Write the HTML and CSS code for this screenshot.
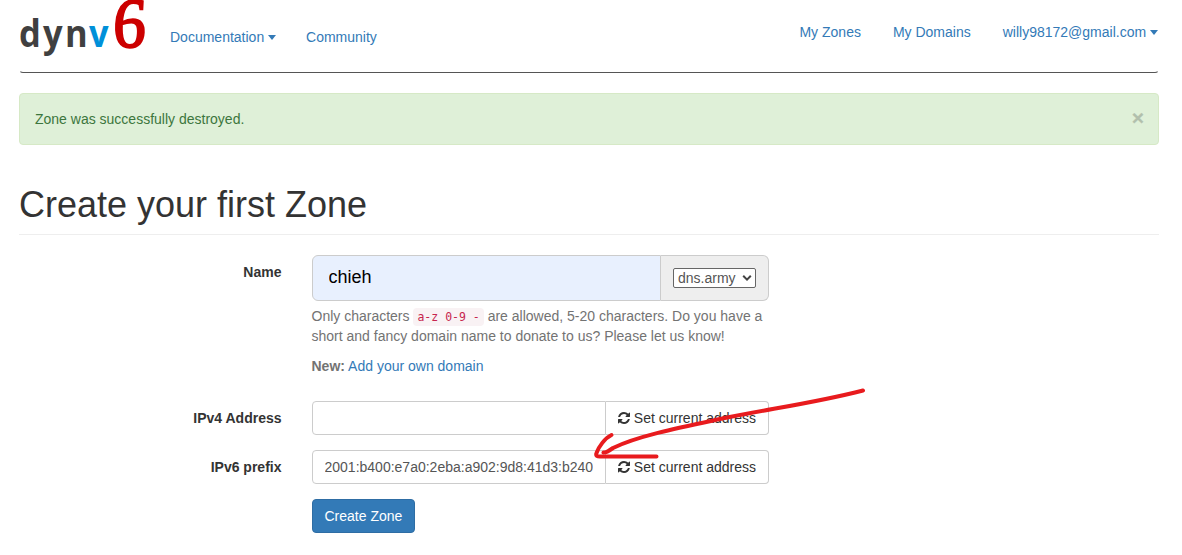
FILE: index.html
```html
<!DOCTYPE html>
<html lang="en">
<head>
<meta charset="utf-8">
<title>dynv6</title>
<link rel="stylesheet" href="styles.css">
</head>
<body>
<svg class="symbols" aria-hidden="true">
  <symbol id="refresh" viewBox="0 0 1536 1536">
    <path fill="currentColor" d="M1511 928q0 5-1 7-64 268-268 434.500t-478 166.500q-146 0-282.500-55t-243.500-157l-129 129q-19 19-45 19t-45-19-19-45v-448q0-26 19-45t45-19h448q26 0 45 19t19 45-19 45l-137 137q71 66 161 102t187 36q134 0 250-65t186-179q11-17 53-117 8-23 30-23h192q13 0 22.500 9.500t9.500 22.500zM1536 128v448q0 26-19 45t-45 19h-448q-26 0-45-19t-19-45 19-45l138-138q-148-137-349-137-134 0-250 65t-186 179q-11 17-53 117-8 23-30 23h-199q-13 0-22.500-9.500t-9.500-22.500v-7q65-268 270-434.500t480-166.500q146 0 284 55.500t245 156.500l130-129q19-19 45-19t45 19 19 45z"/>
  </symbol>
</svg>
<div class="container">
  <header class="navbar">
    <a class="brand" href="#" aria-label="dynv6">
      <svg width="131" height="72" viewBox="0 0 131 72">
        <text class="brand-word" transform="scale(.92 1)" x="-1 25 49 75" y="47">dyn<tspan class="brand-v">v</tspan></text>
        <text class="brand-six" transform="translate(92 46.500) skewX(-3) scale(.93 1)">6</text>
      </svg>
    </a>
    <nav class="nav nav-main">
      <a href="#">Documentation <span class="caret"></span></a>
      <a href="#">Community</a>
    </nav>
    <nav class="nav nav-user">
      <a href="#">My Zones</a>
      <a href="#">My Domains</a>
      <a href="#">willy98172@gmail.com <span class="caret"></span></a>
    </nav>
  </header>

  <div class="alert"><span>Zone was successfully destroyed.</span><button class="close" type="button">×</button></div>

  <h1>Create your first Zone</h1>

  <form>
    <div class="row name-row">
      <label for="name">Name</label>
      <div class="field">
        <div class="group group-lg">
          <input id="name" type="text" value="chieh">
          <div class="addon"><span class="select">dns.army <svg width="10" height="6" viewBox="0 0 10 6"><path d="M1.200 .8 5 4.600 8.800 .8" fill="none" stroke="#444" stroke-width="2"/></svg></span></div>
        </div>
        <p class="help">Only characters <code>a-z 0-9 -</code> are allowed, 5-20 characters. Do you have a<br>short and fancy domain name to donate to us? Please let us know!</p>
        <p class="help"><strong>New:</strong> <a href="#">Add your own domain</a></p>
      </div>
    </div>
    <div class="row">
      <label for="ipv4">IPv4 Address</label>
      <div class="field group">
        <input id="ipv4" type="text">
        <button class="btn" type="button"><svg class="icon"><use href="#refresh"/></svg>Set current address</button>
      </div>
    </div>
    <div class="row">
      <label for="ipv6">IPv6 prefix</label>
      <div class="field group">
        <input id="ipv6" type="text" value="2001:b400:e7a0:2eba:a902:9d8:41d3:b240">
        <button class="btn" type="button"><svg class="icon"><use href="#refresh"/></svg>Set current address</button>
      </div>
    </div>
    <div class="row">
      <div class="field offset"><button class="btn primary" type="button">Create Zone</button></div>
    </div>
  </form>
</div>
<svg class="arrow" width="280" height="80" viewBox="590 385 280 80" fill="none" stroke="#e81b1e" stroke-width="4" stroke-linecap="round" stroke-linejoin="round">
  <path d="M863 390.500C815 403 768 409 720 419C682 427 637 436 613 448Q606 453 603.500 452.500"/>
  <path d="M611.500 435C605 438 598.500 447 596.500 453Q595 457 601 456.500H656.500"/>
</svg>
</body>
</html>
```
FILE: styles.css
```css
* { box-sizing: border-box; }
body {
  margin: 0;
  height: 555px;
  overflow: hidden;
  position: relative;
  background: #fff;
  color: #333;
  font: 14px/20px "Liberation Sans", Arial, sans-serif;
}
a { color: #337ab7; text-decoration: none; }
input, button { font: inherit; }
.symbols { display: none; }
.container { width: 1140px; margin-left: 19px; }
.navbar {
  display: flex;
  height: 73px;
  border: 1px solid transparent;
  border-top: 0;
  border-bottom-color: #555;
  border-radius: 4px;
}
.brand { width: 134px; height: 72px; }
.brand svg { display: block; }
.brand-word { font: bold 37.500px "Open Sans", sans-serif; fill: #404040; }
.brand-v { fill: #0090d9; }
.brand-six { font: 71px "Liberation Serif", serif; fill: #c00; stroke: #c00; stroke-width: 2px; }
.nav { display: flex; }
.nav a { padding: 0 16px; white-space: nowrap; }
.nav-main { padding-top: 27px; }
.nav-main a + a { padding-left: 14px; }
.nav-user { padding-top: 22px; margin-left: auto; margin-right: -16px; }
.caret {
  display: inline-block;
  vertical-align: 2px;
  border-top: 5px solid;
  border-left: 4px solid transparent;
  border-right: 4px solid transparent;
}
.alert {
  display: flex;
  justify-content: space-between;
  height: 52px;
  margin-top: 20px;
  padding: 15px;
  border: 1px solid #d6e9c6;
  border-radius: 4px;
  background: #dff0d8;
  color: #3c763d;
}
.close {
  padding: 0;
  border: 0;
  background: none;
  color: #000;
  font-size: 21px;
  font-weight: bold;
  line-height: 19px;
  height: 20px;
  margin: -2px -1px 0 0;
  -webkit-text-stroke: .3px #000;
  opacity: .2;
}
h1 {
  margin: 40px 0 20px;
  padding-bottom: 9px;
  border-bottom: 1px solid #eee;
  font-size: 36px;
  font-weight: 500;
  line-height: 40px;
}
.row { display: flex; margin-bottom: 15px; }
label { width: 262.500px; padding-top: 7px; text-align: right; font-weight: bold; }
.field { width: 457.500px; margin-left: 30px; }
.field.offset { margin-left: 292.500px; }
.name-row { margin-bottom: 25px; }
.group { display: flex; height: 34px; }
.group input {
  flex: 1;
  min-width: 0;
  padding: 6px 12px;
  border: 1px solid #ccc;
  border-radius: 4px 0 0 4px;
  color: #555;
  background: #fff;
}
.group-lg { height: 46px; }
.group-lg input { padding: 8px 16px 10px; font-size: 18px; color: #000; background: #e8f0fe; border-radius: 6px 0 0 6px; }
.addon {
  display: flex;
  align-items: center;
  padding: 0 12px;
  border: 1px solid #ccc;
  border-left: 0;
  border-radius: 0 6px 6px 0;
  background: #eee;
}
.select {
  display: flex;
  align-items: center;
  justify-content: space-between;
  width: 83px;
  height: 20px;
  padding: 0 3px 0 4px;
  border: 1px solid #666;
  border-radius: 2px;
  background: #fff;
  color: #555;
}
.help { margin: 5px 0 10px; color: #737373; white-space: nowrap; }
.help + .help { margin-bottom: 0; }
code {
  padding: 2px 4px;
  border-radius: 4px;
  color: #c7254e;
  background: #f9f2f4;
  font: 11.500px "DejaVu Sans Mono", monospace;
}
.btn {
  height: 34px;
  padding: 6px 12px;
  border: 1px solid #ccc;
  border-radius: 4px;
  background: #fff;
  color: #333;
  white-space: nowrap;
}
.group .btn { border-left: 0; border-radius: 0 4px 4px 0; }
.icon { width: 12px; height: 12px; margin-right: 4px; vertical-align: -1px; }
.primary { color: #fff; background: #337ab7; border-color: #2e6da4; }
.arrow { position: absolute; left: 590px; top: 385px; }
```
